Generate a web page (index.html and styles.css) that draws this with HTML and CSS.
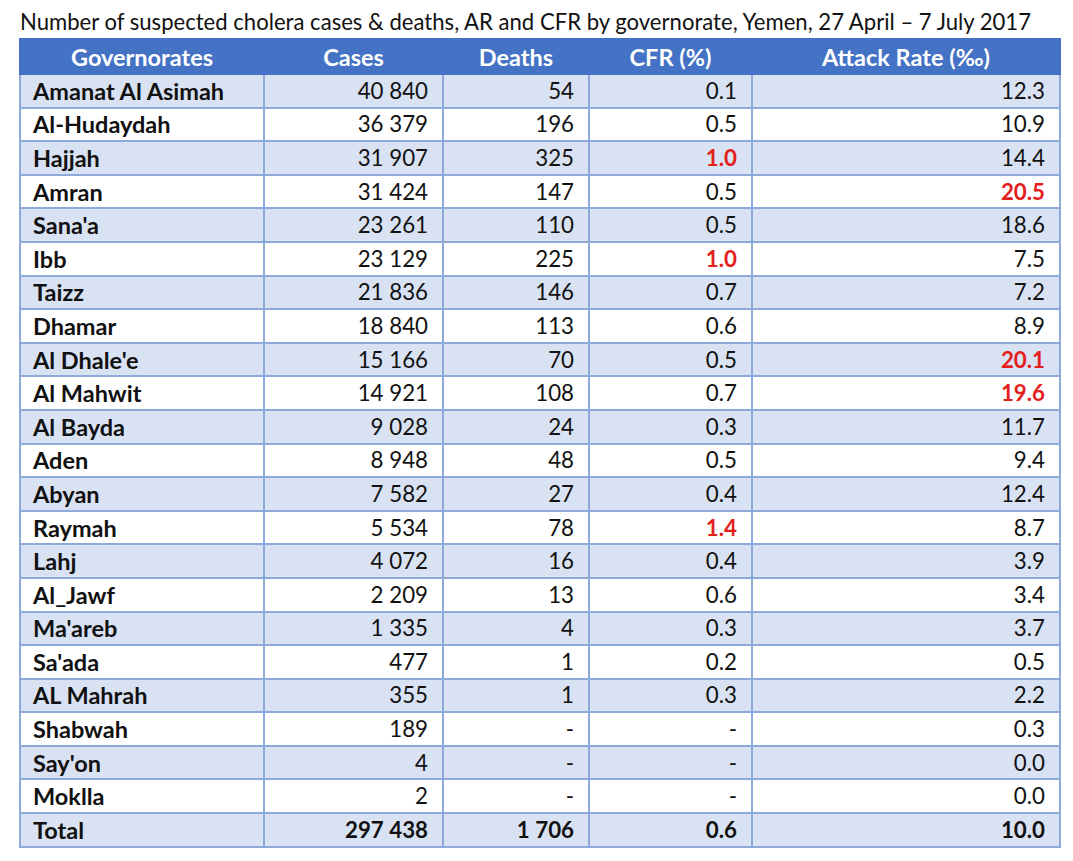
FILE: index.html
```html
<!DOCTYPE html>
<html>
<head>
<meta charset="utf-8">
<link rel="stylesheet" href="styles.css">
</head>
<body>
<div class="page">
  <p class="title">Number of suspected cholera cases &amp; deaths, AR and CFR by governorate, Yemen, 27 April – 7 July 2017</p>
  <table class="data">
    <colgroup>
      <col class="c1"><col class="c2"><col class="c3"><col class="c4"><col class="c5">
    </colgroup>
    <thead>
      <tr><th>Governorates</th><th>Cases</th><th>Deaths</th><th>CFR (%)</th><th>Attack Rate (‰)</th></tr>
    </thead>
    <tbody>
      <tr><td>Amanat Al Asimah</td><td>40 840</td><td>54</td><td>0.1</td><td>12.3</td></tr>
      <tr><td>Al-Hudaydah</td><td>36 379</td><td>196</td><td>0.5</td><td>10.9</td></tr>
      <tr><td>Hajjah</td><td>31 907</td><td>325</td><td class="hi">1.0</td><td>14.4</td></tr>
      <tr><td>Amran</td><td>31 424</td><td>147</td><td>0.5</td><td class="hi">20.5</td></tr>
      <tr><td>Sana'a</td><td>23 261</td><td>110</td><td>0.5</td><td>18.6</td></tr>
      <tr><td>Ibb</td><td>23 129</td><td>225</td><td class="hi">1.0</td><td>7.5</td></tr>
      <tr><td>Taizz</td><td>21 836</td><td>146</td><td>0.7</td><td>7.2</td></tr>
      <tr><td>Dhamar</td><td>18 840</td><td>113</td><td>0.6</td><td>8.9</td></tr>
      <tr><td>Al Dhale'e</td><td>15 166</td><td>70</td><td>0.5</td><td class="hi">20.1</td></tr>
      <tr><td>Al Mahwit</td><td>14 921</td><td>108</td><td>0.7</td><td class="hi">19.6</td></tr>
      <tr><td>Al Bayda</td><td>9 028</td><td>24</td><td>0.3</td><td>11.7</td></tr>
      <tr><td>Aden</td><td>8 948</td><td>48</td><td>0.5</td><td>9.4</td></tr>
      <tr><td>Abyan</td><td>7 582</td><td>27</td><td>0.4</td><td>12.4</td></tr>
      <tr><td>Raymah</td><td>5 534</td><td>78</td><td class="hi">1.4</td><td>8.7</td></tr>
      <tr><td>Lahj</td><td>4 072</td><td>16</td><td>0.4</td><td>3.9</td></tr>
      <tr><td>Al_Jawf</td><td>2 209</td><td>13</td><td>0.6</td><td>3.4</td></tr>
      <tr><td>Ma'areb</td><td>1 335</td><td>4</td><td>0.3</td><td>3.7</td></tr>
      <tr><td>Sa'ada</td><td>477</td><td>1</td><td>0.2</td><td>0.5</td></tr>
      <tr><td>AL Mahrah</td><td>355</td><td>1</td><td>0.3</td><td>2.2</td></tr>
      <tr><td>Shabwah</td><td>189</td><td>-</td><td>-</td><td>0.3</td></tr>
      <tr><td>Say'on</td><td>4</td><td>-</td><td>-</td><td>0.0</td></tr>
      <tr><td>Moklla</td><td>2</td><td>-</td><td>-</td><td>0.0</td></tr>
      <tr class="total"><td>Total</td><td>297 438</td><td>1 706</td><td>0.6</td><td>10.0</td></tr>
    </tbody>
  </table>
</div>
</body>
</html>
```
FILE: styles.css
```css
html, body {
  margin: 0;
  padding: 0;
  background: #ffffff;
}
.page {
  padding: 9px 0 0 19px;
  font-family: "Lato", "Open Sans", sans-serif;
  color: #111111;
}
.title {
  margin: 0 0 4px 1px;
  font-size: 22.1px;
  line-height: 25px;
  white-space: nowrap;
}
.data {
  border-collapse: collapse;
  table-layout: fixed;
  width: 1040px;
  font-size: 22.3px;
}
.c1 { width: 244px; }
.c2 { width: 179px; }
.c3 { width: 146px; }
.c4 { width: 163px; }
.c5 { width: 308px; }
.data th {
  background: #4472c4;
  color: #ffffff;
  font-weight: 700;
  font-size: 23.5px;
  height: 33px;
  padding: 0;
  text-align: center;
  border: 2px solid #4472c4;
  line-height: 26px;
}
.data td {
  height: 31.6px;
  padding: 0 14px 0 13px;
  border: 2px solid #8eaadb;
  text-align: right;
  line-height: 24px;
}
.data td:first-child {
  text-align: left;
  font-weight: 700;
  font-size: 23.5px;
  padding-left: 12px;
}
.data tbody tr:nth-child(odd) td {
  background: #d9e2f3;
}
.data td.hi {
  color: #e3201b;
  font-weight: 700;
}
.data tr.total td {
  font-weight: 700;
}
```
